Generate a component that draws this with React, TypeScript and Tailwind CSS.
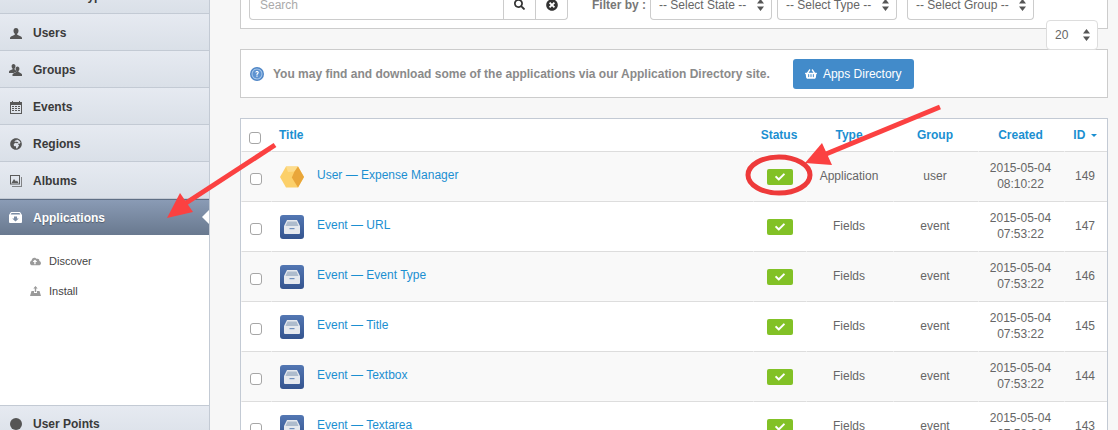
import React from 'react';
import { FaCheck, FaSearch, FaShoppingBasket, FaTimesCircle, FaGlobeAfrica, FaCloudUploadAlt } from 'react-icons/fa';

const font = 'font-["Liberation_Sans",Arial,sans-serif]';

const UserIcon = () => (
  <svg width="12" height="11" viewBox="0 0 12 11" fill="#555">
    <path d="M6 0C4.300 0 3.500 1.200 3.500 2.800 3.500 4.300 4.200 5.300 4.800 5.800V6.800L1 8.500C.4 8.800 0 9.400 0 10v1h12v-1c0-.6-.4-1.200-1-1.500L7.200 6.800V5.800C7.800 5.300 8.500 4.300 8.500 2.800 8.500 1.200 7.700 0 6 0z" />
  </svg>
);

const GroupIcon = () => (
  <svg width="13" height="12" viewBox="0 0 13 12" fill="#555">
    <path d="M4.500 0C3.300 0 2.600 1 2.600 2.200c0 1.100.5 1.900 1 2.300v.8L.8 6.600C.3 6.800 0 7.300 0 7.800V9h4.500L8 7.500 5.500 5.300v-.8c.5-.4 1-1.200 1-2.300C6.500 1 5.700 0 4.500 0z" />
    <path d="M8.500 2.500c-1.200 0-1.900 1-1.900 2.200 0 1.100.5 1.900 1 2.300v.8L4.300 9.400c-.5.200-.8.700-.8 1.200V12H13v-1.400c0-.5-.3-1-.8-1.200L9.400 7.800V7c.5-.4 1-1.200 1-2.300 0-1.200-.8-2.200-1.900-2.200z" />
  </svg>
);

const CalendarIcon = () => (
  <svg width="12" height="13" viewBox="0 0 12 13" fill="#5a5a5a">
    <path d="M0 1h2V0h1v1h6V0h1v1h2v12H0zM1 4v8h10V4z" fillRule="evenodd" />
    <rect x="2" y="5" width="8" height="1" />
    <rect x="2" y="7" width="8" height="1" />
    <rect x="2" y="9" width="8" height="1" />
    <rect x="4" y="5" width="1" height="6" fill="#dfe4eb" />
    <rect x="7" y="5" width="1" height="6" fill="#dfe4eb" />
  </svg>
);

const AlbumIcon = () => (
  <svg width="12" height="12" viewBox="0 0 12 12" fill="#5a5a5a">
    <path d="M0 0h10v9.500H0zM1 1v7.500h8V1z" fillRule="evenodd" />
    <path d="M1.500 8l2.500-4 2 2.500 1-1L8.500 8z" />
    <path d="M11 2v9H2v1h10V2z" opacity="0.7" />
  </svg>
);

const InboxIcon = ({ color = '#fff', hole = '#7a8ca5', size = 13 }: { color?: string; hole?: string; size?: number }) => (
  <svg width={size} height={size - 2} viewBox="0 0 13 11">
    <path d="M2 0h9l2 3v7a1 1 0 0 1-1 1H1a1 1 0 0 1-1-1V3z" fill={color} />
    <path d="M2.500 1h8l.8 1.500H1.700z" fill={hole} />
    <path d="M5 4.500h3v2h1.800L6.500 9.500 3.200 6.500H5z" fill={hole} />
  </svg>
);

const InstallIcon = () => (
  <svg width="11" height="10" viewBox="0 0 11 10" fill="#9a9a9a">
    <path d="M5.500 0l2.200 2.400H6.200V6H4.800V2.400H3.300z" />
    <path d="M1.500 5H4v2h3V5h2.500L11 10H0z" />
  </svg>
);

const HelpIcon = () => (
  <svg width="14" height="14" viewBox="0 0 14 14">
    <circle cx="7" cy="7" r="7" fill="#4f86c6" />
    <circle cx="7" cy="7" r="5.500" fill="#a9c8ea" />
    <circle cx="7" cy="7" r="4.500" fill="#5d93d1" />
    <path d="M5.300 5.600c0-1 .8-1.600 1.800-1.600s1.700.6 1.700 1.500c0 1.300-1.300 1.200-1.300 2.400H6.400c0-1.700 1.200-1.600 1.200-2.400 0-.3-.2-.5-.6-.5s-.6.300-.6.600zM6.400 8.500h1.200v1.200H6.400z" fill="#fff" />
  </svg>
);

const SelectCaret = () => (
  <svg width="7" height="12" viewBox="0 0 7 12" fill="#555" className="absolute right-[7px] top-1/2 -translate-y-1/2">
    <path d="M3.500 0L7 4.500H0zM3.500 12L0 7.500h7z" />
  </svg>
);

const BoxIcon = () => (
  <svg width="24" height="22" viewBox="0 0 24 22">
    <path d="M6 .5h12L24 11l-6 10.500H6L0 11z" fill="#fcd06a" />
    <path d="M6 .5h12l-3.500 5L8 6z" fill="#fddc8c" />
    <path d="M18 .5L24 11l-6 10.500L11.800 11.500 14.500 5.500z" fill="#e9a63a" />
  </svg>
);

const TrayIcon = () => (
  <div className="flex h-6 w-6 shrink-0 items-center justify-center rounded-[3px] bg-gradient-to-b from-[#5377b3] to-[#34548f]">
    <svg width="16" height="14" viewBox="0 0 16 14">
      <path d="M3 0h10l3 6v7a1 1 0 0 1-1 1H1a1 1 0 0 1-1-1V6z" fill="#e6e9ee" />
      <path d="M3.500 1.500h9L14.500 6h-13z" fill="#aebccd" />
      <path d="M5.500 8h5v1.200h-5z" fill="#6f8fbd" />
    </svg>
  </div>
);

const menu = [
  { label: 'Users', icon: <UserIcon /> },
  { label: 'Groups', icon: <GroupIcon /> },
  { label: 'Events', icon: <CalendarIcon /> },
  { label: 'Regions', icon: <FaGlobeAfrica size={12} color="#555" /> },
  { label: 'Albums', icon: <AlbumIcon /> },
];

const rows = [
  { title: 'User — Expense Manager', type: 'Application', group: 'user', time: '08:10:22', id: 149, box: true },
  { title: 'Event — URL', type: 'Fields', group: 'event', time: '07:53:22', id: 147 },
  { title: 'Event — Event Type', type: 'Fields', group: 'event', time: '07:53:22', id: 146 },
  { title: 'Event — Title', type: 'Fields', group: 'event', time: '07:53:22', id: 145 },
  { title: 'Event — Textbox', type: 'Fields', group: 'event', time: '07:53:22', id: 144 },
  { title: 'Event — Textarea', type: 'Fields', group: 'event', time: '07:53:22', id: 143 },
];

const menuItem = 'flex h-[37px] items-center border-b border-[#c3cad4] bg-gradient-to-b from-[#e6eaf1] to-[#dae0e8] pt-[2px] text-[12px] font-bold text-[#3a3a3a]';
const cell = 'border-b border-l border-b-[#ddd] border-l-transparent';

const Check = () => <span className="block h-[12px] w-[12px] rounded-[3px] border border-[#a6a6a6] bg-white" />;

const App: React.FC = () => {
  return (
    <div className={`relative flex h-[430px] w-[1118px] overflow-hidden bg-[#f7f7f7] ${font}`}>
      {/* Sidebar */}
      <aside className="flex h-[430px] w-[210px] shrink-0 flex-col border-r border-[#c3cad4] bg-white">
        <div className="-mt-[23px] shrink-0">
          <div className={menuItem}>
            <span className="pl-[33px]">Custom Types</span>
          </div>
          {menu.map((m) => (
            <div key={m.label} className={menuItem}>
              <span className="flex w-[33px] justify-center pr-[2px]">{m.icon}</span>
              {m.label}
            </div>
          ))}
          <div className="relative flex h-[36px] items-center border-t border-[#5f6f85] bg-gradient-to-b from-[#8a9bb5] to-[#69798f] text-[12px] font-bold text-white [text-shadow:0_1px_1px_rgba(0,0,0,0.3)]">
            <span className="flex w-[33px] justify-center pr-[3px]"><InboxIcon /></span>
            Applications
            <span className="absolute right-0 top-[10px] h-0 w-0 border-y-[7px] border-r-[7px] border-y-transparent border-r-white" />
          </div>
        </div>
        <div className="flex h-[170px] shrink-0 flex-col gap-[12px] pl-[30px] pt-[17px] text-[11px] text-[#444]">
          <div className="flex h-[18px] items-center gap-[8px]"><FaCloudUploadAlt size={11} color="#9a9a9a" />Discover</div>
          <div className="flex h-[18px] items-center gap-[8px]"><InstallIcon />Install</div>
        </div>
        <div className="flex h-[37px] shrink-0 items-center border-t border-[#c3cad4] bg-gradient-to-b from-[#e6eaf1] to-[#dae0e8] text-[12px] font-bold text-[#3a3a3a]">
          <span className="ml-[10px] mr-[11px] h-[12px] w-[12px] rounded-full bg-[#555]" />
          User Points
        </div>
      </aside>

      {/* Main */}
      <main className="flex min-w-0 flex-1 flex-col pl-[30px] pr-[10px]">
        <div className="flex h-[29px] shrink-0 items-end border border-t-0 border-[#ccc] bg-white pb-[8px] pl-[8px]">
          <div className="flex h-[30px] w-[319px] shrink-0 items-stretch rounded-b-[4px] border border-t-0 border-[#ccc] text-[12px] text-[#aaa]">
            <span className="flex flex-1 items-center pl-[10px]">Search</span>
            <span className="flex w-[32px] items-center justify-center border-l border-[#ccc]"><FaSearch size={11} color="#333" /></span>
            <span className="flex w-[32px] items-center justify-center border-l border-[#ccc]"><FaTimesCircle size={12} color="#333" /></span>
          </div>
          <span className="ml-[24px] flex h-[30px] w-[58px] shrink-0 items-center text-[12px] font-bold text-[#777]">Filter by :</span>
          <div className="flex h-[30px] gap-[5px] text-[12px] text-[#666]">
            <div className="relative flex w-[122px] items-center rounded-b-[4px] border border-t-0 border-[#ccc] pl-[8px]">-- Select State --<SelectCaret /></div>
            <div className="relative flex w-[120px] items-center rounded-b-[4px] border border-t-0 border-[#ccc] pl-[8px]">-- Select Type --<SelectCaret /></div>
            <div className="relative ml-[5px] flex w-[127px] items-center rounded-b-[4px] border border-t-0 border-[#ccc] pl-[8px]">-- Select Group --<SelectCaret /></div>
          </div>
        </div>

        <div className="relative mt-[20px] flex h-[49px] shrink-0 items-center border border-[#ccc] bg-white pl-[9px]">
          <HelpIcon />
          <span className="ml-[9px] text-[12px] font-bold text-[#8a8a8a]">You may find and download some of the applications via our Application Directory site.</span>
          <button className="ml-[23px] flex h-[30px] w-[121px] items-center justify-center gap-[6px] rounded-[3px] bg-[#428bca] text-[12px] text-white">
            <FaShoppingBasket size={12} />Apps Directory
          </button>
          <div className="absolute -top-[30px] right-[9px] flex h-[30px] w-[52px] items-center rounded-[4px] border border-[#ddd] bg-white pl-[8px] text-[12px] text-[#666]">
            20
            <SelectCaret />
          </div>
        </div>

        <div className="mt-[20px] shrink-0 border border-[#c3cad4] bg-white">
          <table className="w-full table-fixed border-separate border-spacing-0 text-[12px]">
            <colgroup>
              <col className="w-[30px]" />
              <col />
              <col className="w-[53px]" />
              <col className="w-[87px]" />
              <col className="w-[85px]" />
              <col className="w-[86px]" />
              <col className="w-[43px]" />
            </colgroup>
            <thead>
              <tr className="h-[33px] text-[#1b8fd1]">
                <th className={`${cell} pl-[7px] pt-[5px] text-left align-middle`}><Check /></th>
                <th className={`${cell} pl-[7px] text-left font-bold`}>Title</th>
                <th className={`${cell} pr-[2px] font-bold`}>Status</th>
                <th className={`${cell} pr-[2px] font-bold`}>Type</th>
                <th className={`${cell} pr-[2px] font-bold`}>Group</th>
                <th className={`${cell} pr-[2px] font-bold`}>Created</th>
                <th className={`${cell} pr-[2px] font-bold`}>
                  ID <span className="ml-[2px] inline-block h-0 w-0 border-x-[3px] border-t-[3px] border-x-transparent border-t-[#1b8fd1] align-middle" />
                </th>
              </tr>
            </thead>
            <tbody>
              {rows.map((r, i) => (
                <tr key={r.id} className={`h-[50px] text-[#666] ${i % 2 === 0 ? 'bg-[#f9f9f9]' : ''}`}>
                  <td className={`${cell} pl-[8px] pt-[4px]`}><Check /></td>
                  <td className={`${cell} pl-[8px]`}>
                    <div className="flex items-center gap-[13px] text-[#1b8fd1]">
                      {r.box ? <BoxIcon /> : <TrayIcon />}
                      <span className="pb-[3px]">{r.title}</span>
                    </div>
                  </td>
                  <td className={`${cell} pr-[1px]`}>
                    <span className="mx-auto flex h-[16px] w-[26px] items-center justify-center rounded-[2px] bg-[#82c126]"><FaCheck size={10} color="#fff" /></span>
                  </td>
                  <td className={`${cell} pb-[2px] pr-[2px] text-center`}>{r.type}</td>
                  <td className={`${cell} pb-[2px] pr-[2px] text-center`}>{r.group}</td>
                  <td className={`${cell} pb-[2px] pr-[2px] text-center leading-[16px]`}>2015-05-04<br />{r.time}</td>
                  <td className={`${cell} pb-[2px] pr-[2px] text-center`}>{r.id}</td>
                </tr>
              ))}
            </tbody>
          </table>
        </div>
      </main>

      {/* Annotations */}
      <svg className="pointer-events-none absolute left-0 top-0" width="1118" height="430" viewBox="0 0 1118 430">
        <path d="M275 145L186 203" stroke="#fb4141" strokeWidth="5" fill="none" />
        <path d="M167 218L180 193L193 212z" fill="#fb4141" />
        <path d="M940 107L826 154" stroke="#fb4141" strokeWidth="5" fill="none" />
        <path d="M805 163L822 143L832 165z" fill="#fb4141" />
        <ellipse cx="779" cy="175" rx="31" ry="18" stroke="#ee3a3a" strokeWidth="5" fill="none" />
      </svg>
    </div>
  );
};

export default App;
